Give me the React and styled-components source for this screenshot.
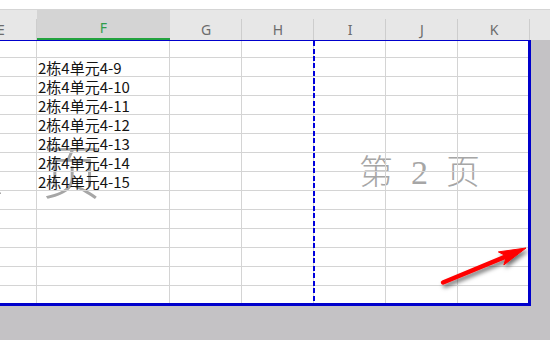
import React from 'react';
import styled, { createGlobalStyle } from 'styled-components';

const GlobalStyle = createGlobalStyle`
  html, body {
    margin: 0;
    padding: 0;
    background: #ffffff;
    overflow: hidden;
  }
`;

const Screen = styled.div`
  position: relative;
  width: 550px;
  height: 340px;
  display: flex;
  flex-direction: column;
  overflow: hidden;
  font-family: "Noto Sans CJK SC", "Noto Sans", sans-serif;
`;

const TopStrip = styled.div`
  height: 9px;
  flex: none;
  background: #ffffff;
  border-bottom: 1px solid #d5d5d5;
`;

const HeaderRow = styled.div`
  height: 30px;
  flex: none;
  display: flex;
  margin-left: -35px;
  background: #e7e7e7;
`;

const HeaderCell = styled.div`
  box-sizing: border-box;
  width: ${(p) => p.$w}px;
  flex: none;
  display: flex;
  align-items: center;
  justify-content: center;
  padding-top: ${(p) => (p.$active ? 6 : 8)}px;
  font-family: "Noto Sans", "Liberation Sans", sans-serif;
  font-size: 14px;
  color: ${(p) => (p.$active ? '#2f9d4a' : '#6c6c6c')};
  background: ${(p) =>
    p.$active
      ? '#d4d4d4'
      : 'linear-gradient(#cdcdcd, #cdcdcd) right bottom / 1px 21px no-repeat'};
  border-bottom: ${(p) => (p.$active ? '2px solid #22a23e' : 'none')};
`;

const Sheet = styled.div`
  position: relative;
  flex: 1;
  background: #c4c2c5;
  overflow: hidden;
`;

const Page = styled.div`
  position: relative;
  box-sizing: border-box;
  margin-left: -35px;
  width: 566px;
  height: 266px;
  background: #ffffff;
  border-top: 1px solid #0000cc;
  border-right: 3px solid #0000cc;
  border-bottom: 3px solid #0000cc;
  overflow: hidden;
`;

const Grid = styled.div`
  position: relative;
  z-index: 1;
  display: grid;
  grid-template-columns: 72px 133px repeat(4, 72px) 1fr;
  grid-template-rows: 17px;
  grid-auto-rows: 19px;
`;

const Cell = styled.div`
  box-sizing: border-box;
  border-bottom: 1px solid #d4d4d4;
  border-right: ${(p) => (p.$last ? 'none' : '1px solid #d4d4d4')};
  padding: 2px 0 0 1px;
  font-size: 15px;
  line-height: 16px;
  color: #141414;
  white-space: nowrap;
  overflow: visible;
`;

const PageBreak = styled.div`
  position: absolute;
  z-index: 2;
  left: 348px;
  top: 0;
  bottom: 0;
  width: 2px;
  background: repeating-linear-gradient(
    to bottom,
    #0000dd 0 5px,
    transparent 5px 7.5px
  );
`;

const Watermark = styled.div`
  position: absolute;
  z-index: 0;
  left: ${(p) => p.$left}px;
  top: ${(p) => p.$top}px;
  display: flex;
  align-items: baseline;
  gap: ${(p) => p.$gap}px;
  font-family: "Liberation Serif", "Noto Sans CJK SC", serif;
  font-size: ${(p) => p.$size}px;
  font-weight: 300;
  line-height: 1;
  color: #a6a6a6;
  white-space: nowrap;
`;

const Digit = styled.span`
  margin-right: ${(p) => p.$after || 0}px;
`;

const Overlay = styled.svg`
  position: absolute;
  left: 0;
  top: 0;
  pointer-events: none;
  z-index: 5;
`;

const columns = ['E', 'F', 'G', 'H', 'I', 'J', 'K'];
const widths = [72, 133, 72, 72, 72, 72, 72];
const units = ['9', '10', '11', '12', '13', '14', '15'];
const rowCount = 14;

const App = () => {
  const rows = [];
  for (let r = 0; r < rowCount; r++) {
    const label = r >= 1 && r <= units.length ? `2栋4单元4-${units[r - 1]}` : '';
    columns.forEach((c, i) => {
      rows.push(
        <Cell key={`${c}${r}`} $last={i === columns.length - 1}>
          {c === 'F' ? label : ''}
        </Cell>
      );
    });
  }

  return (
    <>
      <GlobalStyle />
      <Screen>
        <TopStrip />
        <HeaderRow>
          {columns.map((c, i) => (
            <HeaderCell key={c} $w={widths[i]} $active={c === 'F'}>
              {c}
            </HeaderCell>
          ))}
        </HeaderRow>
        <Sheet>
          <Page>
            <Watermark $left={-80} $top={104} $size={59} $gap={31}>
              <span>第</span>
              <Digit $after={7}>1</Digit>
              <span>页</span>
            </Watermark>
            <Watermark $left={394} $top={115} $size={34} $gap={18}>
              <span>第</span>
              <Digit>2</Digit>
              <span>页</span>
            </Watermark>
            <Grid>{rows}</Grid>
            <PageBreak />
          </Page>
        </Sheet>
        <Overlay width="550" height="340" viewBox="0 0 550 340">
          <defs>
            <filter id="shadow" x="-20%" y="-40%" width="140%" height="180%">
              <feDropShadow dx="2" dy="3" stdDeviation="2" floodColor="#000" floodOpacity="0.55" />
            </filter>
          </defs>
          <g filter="url(#shadow)" fill="#ff0000" stroke="#ff0000">
            <line x1="443" y1="282.5" x2="505" y2="256.8" strokeWidth="4.5" strokeLinecap="round" />
            <polygon points="526,248 498.4,251.9 506.6,256.1 503.8,264.9" strokeWidth="1" strokeLinejoin="round" />
          </g>
        </Overlay>
      </Screen>
    </>
  );
};

export default App;
